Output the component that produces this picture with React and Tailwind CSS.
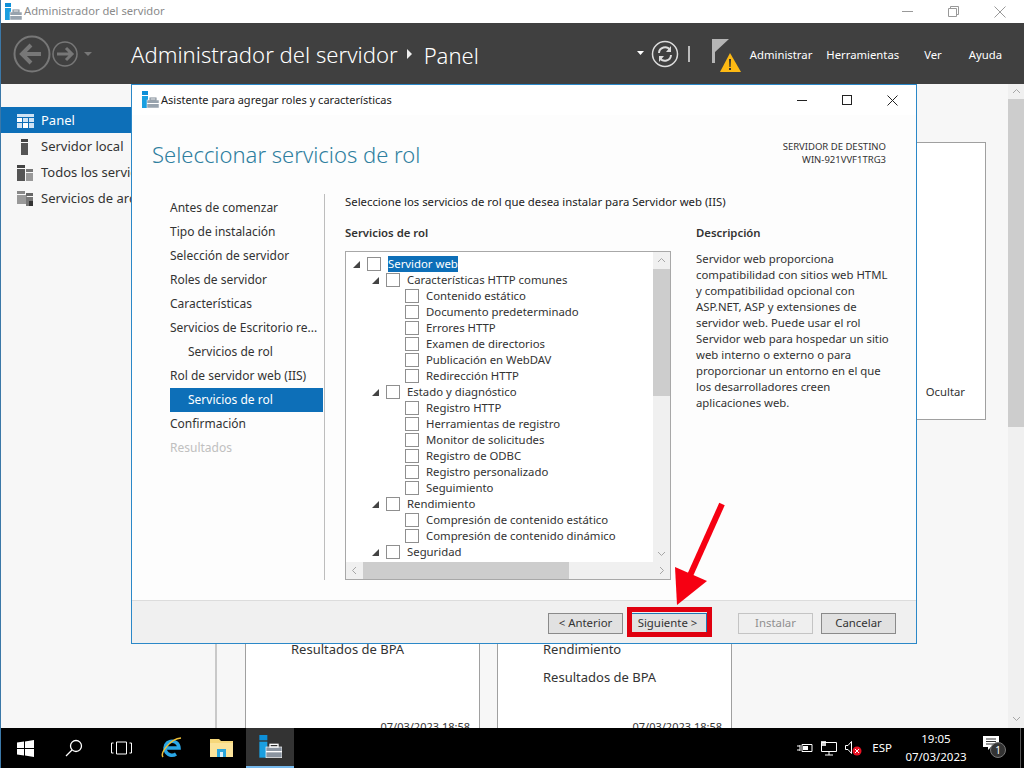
import React from "react";

const navItems = [
  { label: "Antes de comenzar" },
  { label: "Tipo de instalación" },
  { label: "Selección de servidor" },
  { label: "Roles de servidor" },
  { label: "Características" },
  { label: "Servicios de Escritorio re..." },
  { label: "Servicios de rol", sub: true },
  { label: "Rol de servidor web (IIS)" },
  { label: "Servicios de rol", sub: true, active: true },
  { label: "Confirmación" },
  { label: "Resultados", disabled: true },
];

const treeRows = [
  { label: "Servidor web", level: 0, open: true, selected: true },
  { label: "Características HTTP comunes", level: 1, open: true },
  { label: "Contenido estático", level: 2 },
  { label: "Documento predeterminado", level: 2 },
  { label: "Errores HTTP", level: 2 },
  { label: "Examen de directorios", level: 2 },
  { label: "Publicación en WebDAV", level: 2 },
  { label: "Redirección HTTP", level: 2 },
  { label: "Estado y diagnóstico", level: 1, open: true },
  { label: "Registro HTTP", level: 2 },
  { label: "Herramientas de registro", level: 2 },
  { label: "Monitor de solicitudes", level: 2 },
  { label: "Registro de ODBC", level: 2 },
  { label: "Registro personalizado", level: 2 },
  { label: "Seguimiento", level: 2 },
  { label: "Rendimiento", level: 1, open: true },
  { label: "Compresión de contenido estático", level: 2 },
  { label: "Compresión de contenido dinámico", level: 2 },
  { label: "Seguridad", level: 1, open: true },
];

const ServerIcon = ({ size = 18, dark }) => (
  <svg width={size} height={size} viewBox="0 0 18 18">
    <rect x="1" y="0" width="6" height="4" fill="#0d8fd8" />
    <rect x="1" y="5" width="6" height="12" fill="#1a9fe0" />
    <rect x="6" y="9" width="12" height="8" fill={dark ? "#8a94a0" : "#98a3ae"} stroke="#fff" strokeWidth="0.5" />
    <rect x="9" y="7" width="6" height="2" fill="none" stroke={dark ? "#fff" : "#7d8894"} strokeWidth="1" />
    <rect x="6" y="12" width="12" height="1" fill="#fff" />
  </svg>
);

const SideIcon = ({ type }) => {
  if (type === "panel") {
    return (
      <svg width="17" height="14" viewBox="0 0 17 14">
        <rect width="17" height="3" fill="#cfe3f4" />
        <rect y="4" width="5" height="4" fill="#fff" />
        <rect x="6" y="4" width="5" height="4" fill="#cfe3f4" />
        <rect x="12" y="4" width="5" height="4" fill="#cfe3f4" />
        <rect y="9" width="5" height="5" fill="#cfe3f4" />
        <rect x="6" y="9" width="5" height="5" fill="#fff" />
        <rect x="12" y="9" width="5" height="5" fill="#cfe3f4" />
      </svg>
    );
  }
  if (type === "local") {
    return (
      <svg width="17" height="16" viewBox="0 0 17 16">
        <rect x="4" y="0" width="7" height="3" fill="#444" />
        <rect x="4" y="4" width="7" height="12" fill="#555" />
      </svg>
    );
  }
  if (type === "all") {
    return (
      <svg width="17" height="16" viewBox="0 0 17 16">
        <rect x="0" y="0" width="8" height="3" fill="#444" />
        <rect x="0" y="4" width="8" height="12" fill="#555" />
        <rect x="9" y="4" width="7" height="3" fill="#777" />
        <rect x="9" y="8" width="7" height="8" fill="#999" />
      </svg>
    );
  }
  return (
    <svg width="17" height="15" viewBox="0 0 17 15">
      <rect x="0" y="0" width="8" height="3" fill="#888" />
      <rect x="0" y="4" width="10" height="9" fill="#999" />
      <rect x="9" y="2" width="7" height="3" fill="#666" />
      <rect x="9" y="6" width="7" height="9" fill="#777" />
      <rect x="12" y="10" width="4" height="5" fill="#333" />
    </svg>
  );
};

const Chevron = ({ d }) => (
  <svg width="9" height="9" viewBox="0 0 9 9" fill="none" stroke="#a6a6a6" strokeWidth="1">
    <path d={d} />
  </svg>
);

const TreeRow = ({ row }) => {
  const indent = ["pl-[7px]", "pl-[26px]", "pl-[45px]"][row.level];
  return (
    <div className={`flex h-4 shrink-0 items-center ${indent}`}>
      <div className="flex w-[14px] shrink-0 items-center">
        {row.open && (
          <svg width="7" height="7" viewBox="0 0 7 7">
            <path d="M0 7L7 0V7Z" fill="#444" />
          </svg>
        )}
      </div>
      <div className="h-[14px] w-[14px] shrink-0 border border-[#8f8f8f] bg-white" />
      <span
        className={`ml-[7px] whitespace-nowrap leading-4 ${
          row.selected ? "bg-[#0d6fb8] text-white" : "text-[#333]"
        }`}
      >
        {row.label}
      </span>
    </div>
  );
};

const DialogButton = ({ label, disabled }) => (
  <button
    className={`h-[21px] w-[75px] border text-[11.4px] ${
      disabled
        ? "border-[#c4c4c4] bg-[#efefef] text-[#8f8f8f]"
        : "border-[#8a8a8a] bg-[#e1e1e1] text-[#333]"
    }`}
  >
    {label}
  </button>
);

const Dialog = () => (
  <div className="absolute left-[130px] top-[84px] flex h-[560px] w-[786px] flex-col border border-[#2b88c8] bg-white text-xs text-[#333]">
    <div className="flex h-[30px] shrink-0 items-center pl-[9px]">
      <ServerIcon />
      <span className="ml-[2px] text-[11px] text-[#222]">Asistente para agregar roles y características</span>
      <div className="ml-auto flex items-center gap-[35px] pr-[18px]">
        <svg width="10" height="10" viewBox="0 0 10 10"><path d="M0 5.5H10" stroke="#222" /></svg>
        <svg width="10" height="10" viewBox="0 0 10 10"><rect x="0.5" y="0.5" width="9" height="9" fill="none" stroke="#222" /></svg>
        <svg width="11" height="11" viewBox="0 0 11 11"><path d="M0.5 0.5L10.5 10.5M10.5 0.5L0.5 10.5" stroke="#222" /></svg>
      </div>
    </div>

    <div className="flex min-h-0 flex-1 flex-col bg-[#fdfdfd]">
      <div className="flex h-[79px] shrink-0 items-start justify-between pl-[20px] pr-[30px]">
        <h1 className="mt-[21px] text-[22px] font-light leading-[36px] text-[#2f7f9f]">
          Seleccionar servicios de rol
        </h1>
        <div className="mt-[25px] text-right text-[9.5px] leading-[13px]">
          <div>SERVIDOR DE DESTINO</div>
          <div>WIN-921VVF1TRG3</div>
        </div>
      </div>

      <div className="flex min-h-0 flex-1">
        <nav className="flex w-[192px] shrink-0 flex-col pl-[38px] pr-[1px] pt-[2px] pb-[20px]">
          {navItems.map((item, i) => (
            <div
              key={i}
              className={`flex h-6 items-center whitespace-nowrap ${item.sub ? "pl-[18px]" : ""} ${
                item.active ? "bg-[#0d6fb8] text-white" : ""
              } ${item.disabled ? "text-[#c0c0c0]" : ""}`}
            >
              {item.label}
            </div>
          ))}
        </nav>

        <div className="mb-[20px] flex min-w-0 flex-1 border-l border-[#bdbdbd] pl-[20px]">
          <div className="flex min-w-0 flex-1 flex-col text-[11.35px]">
            <p className="leading-[16px] text-[#222]">
              Seleccione los servicios de rol que desea instalar para Servidor web (IIS)
            </p>
            <div className="flex min-h-0 flex-1 pt-[15px]">
              <div className="flex w-[326px] shrink-0 flex-col">
                <h2 className="font-semibold leading-4">Servicios de rol</h2>
                <div className="mt-[10px] flex h-[330px] flex-col border border-[#a8a8a8] bg-white">
                  <div className="flex min-h-0 flex-1">
                    <div className="flex min-w-0 flex-1 flex-col overflow-hidden pt-[4px]">
                      {treeRows.map((row, i) => (
                        <TreeRow key={i} row={row} />
                      ))}
                    </div>
                    <div className="flex w-[17px] shrink-0 flex-col bg-[#f0f0f0]">
                      <div className="flex h-[17px] items-center justify-center"><Chevron d="M1 6L4.5 2.5L8 6" /></div>
                      <div className="h-[127px] bg-[#cdcdcd]" />
                      <div className="mt-auto flex h-[17px] items-center justify-center"><Chevron d="M1 3L4.5 6.5L8 3" /></div>
                    </div>
                  </div>
                  <div className="flex h-[17px] shrink-0 bg-[#f0f0f0]">
                    <div className="flex w-[17px] items-center justify-center"><Chevron d="M6 1L2.5 4.5L6 8" /></div>
                    <div className="w-[206px] bg-[#cdcdcd]" />
                    <div className="ml-auto flex w-[17px] items-center justify-center"><Chevron d="M3 1L6.5 4.5L3 8" /></div>
                  </div>
                </div>
              </div>
              <div className="ml-[25px] w-[195px] shrink-0">
                <h2 className="font-semibold leading-4">Descripción</h2>
                <p className="mt-[10px] leading-4">
                  Servidor web proporciona compatibilidad con sitios web HTML y compatibilidad opcional con ASP.NET, ASP y extensiones de servidor web. Puede usar el rol Servidor web para hospedar un sitio web interno o externo o para proporcionar un entorno en el que los desarrolladores creen aplicaciones web.
                </p>
              </div>
            </div>
          </div>
        </div>
      </div>
    </div>

    <div className="flex h-[43px] shrink-0 items-center border-t border-[#dcdcdc] bg-[#f0f0f0] pl-[416px] pt-[2px]">
      <DialogButton label="< Anterior" />
      <div className="ml-[5px] flex h-[21px] w-[79px] items-center justify-center border border-[#1f78b4] bg-[#e1e1e1] text-[11.4px]">Siguiente &gt;</div>
      <div className="ml-[31px]"><DialogButton label="Instalar" disabled /></div>
      <div className="ml-2"><DialogButton label="Cancelar" /></div>
    </div>
  </div>
);

export default function App() {
  return (
    <div className="relative flex h-[768px] w-[1024px] flex-col overflow-hidden border-l border-[#3b78a8] bg-white font-['Noto_Sans',sans-serif] text-[#333]">
      <div className="flex h-[23px] shrink-0 items-center pl-[3px]">
        <ServerIcon />
        <span className="ml-[2px] text-[11.2px] text-[#8a8a8a]">Administrador del servidor</span>
        <div className="ml-auto flex items-center gap-[35px] pr-[18px]">
          <svg width="11" height="11" viewBox="0 0 11 11"><path d="M0 5.5H11" stroke="#999" /></svg>
          <svg width="11" height="11" viewBox="0 0 11 11" fill="none" stroke="#999"><path d="M0.5 2.5H8.5V10.5H0.5ZM2.5 2.5V0.5H10.5V8.5H8.5" /></svg>
          <svg width="12" height="12" viewBox="0 0 12 12"><path d="M0.5 0.5L11.5 11.5M11.5 0.5L0.5 11.5" stroke="#999" /></svg>
        </div>
      </div>

      <header className="flex h-[61px] shrink-0 items-center bg-[#404040] pl-[12px] text-white">
        <svg width="84" height="40" viewBox="0 0 84 40" fill="none" stroke="#777">
          <circle cx="19" cy="20" r="17.5" strokeWidth="2" />
          <path d="M10 20H28M18 11L9 20L18 29" strokeWidth="4" />
          <circle cx="52" cy="20" r="12" strokeWidth="1.5" />
          <path d="M44 20H59M53 14L59 20L53 26" strokeWidth="3" />
          <path d="M71 18H79L75 22Z" fill="#777" stroke="none" />
        </svg>
        <span className="ml-[34px] mt-[2px] text-[22.1px] font-light leading-none">Administrador del servidor</span>
        <svg className="ml-[8px]" width="8" height="10" viewBox="0 0 8 10"><path d="M1 0L6 5L1 10Z" fill="#eee" /></svg>
        <span className="ml-[10px] mt-[2px] text-[22px] font-light leading-none">Panel</span>
        <div className="ml-auto flex items-center pr-[22px] text-[11.3px]">
          <svg width="7" height="5" viewBox="0 0 7 5"><path d="M0 0H7L3.5 4Z" fill="#fff" /></svg>
          <svg className="ml-[7px]" width="28" height="28" viewBox="0 0 28 28" fill="none" stroke="#ddd">
            <circle cx="14" cy="14" r="12.5" strokeWidth="1.5" />
            <path d="M8 13A6 6 0 0 1 19 10M20 15A6 6 0 0 1 9 18" strokeWidth="2" />
            <path d="M20 6V12H15ZM8 22V16H13Z" fill="#ddd" stroke="none" />
          </svg>
          <div className="ml-[9px] h-4 w-[2px] bg-[#bbb]" />
          <svg className="ml-[22px] mt-[4px]" width="30" height="36" viewBox="0 0 30 36">
            <path d="M0 1H3V25H0ZM3 1H17L3 14Z" fill="#b5b5b5" />
            <path d="M18 15L29 34H8Z" fill="#fdb913" />
            <path d="M17 21H19L18.6 29H17.4ZM17 30H19V32H17Z" fill="#333" />
          </svg>
          <span className="ml-[8px] mt-[3px]">Administrar</span>
          <span className="ml-[14px] mt-[3px]">Herramientas</span>
          <span className="ml-[25px] mt-[3px]">Ver</span>
          <span className="ml-[27px] mt-[3px]">Ayuda</span>
        </div>
      </header>

      <div className="flex min-h-0 flex-1 bg-[#f7f7f7]">
        <aside className="w-[216px] shrink-0 border-r-2 border-[#c9c9c9] pt-[23px] text-[13px]">
          {[
            { label: "Panel", icon: "panel", active: true },
            { label: "Servidor local", icon: "local" },
            { label: "Todos los servidores", icon: "all" },
            { label: "Servicios de archivos", icon: "files" },
          ].map((item) => (
            <div
              key={item.label}
              className={`flex h-[26px] items-center whitespace-nowrap pl-[16px] pt-[1px] ${
                item.active ? "bg-[#0d6fb8] text-white" : ""
              }`}
            >
              <SideIcon type={item.icon} />
              <span className="ml-[7px]">{item.label}</span>
            </div>
          ))}
        </aside>

        <main className="flex min-w-0 flex-1 flex-col pl-[28px] pt-[58px]">
          <div className="mr-[22px] flex h-[278px] shrink-0 items-center justify-end border border-[#a0a0a0] bg-white pr-[20px] text-[11.3px]">
            <span className="mt-[222px]">Ocultar</span>
          </div>
          <div className="mt-[40px] flex gap-[17px] text-[13px]">
            <div className="flex h-[300px] w-[235px] shrink-0 flex-col border border-[#a0a0a0] bg-white pl-[45px]">
              <div className="mt-[174px] leading-[28px]">Resultados de BPA</div>
              <div className="mr-[9px] mt-[56px] text-right text-[11px]">07/03/2023 18:58</div>
            </div>
            <div className="flex h-[300px] w-[235px] shrink-0 flex-col border border-[#a0a0a0] bg-white pl-[45px]">
              <div className="mt-[174px] leading-[28px]">Rendimiento</div>
              <div className="leading-[28px]">Resultados de BPA</div>
              <div className="mr-[9px] mt-[28px] text-right text-[11px]">07/03/2023 18:58</div>
            </div>
          </div>
        </main>

        <div className="flex w-4 shrink-0 flex-col bg-[#f0f0f0]">
          <div className="flex h-[15px] items-center justify-center"><Chevron d="M1 6L4.5 2.5L8 6" /></div>
          <div className="h-[328px] bg-[#cdcdcd]" />
          <div className="mt-auto flex h-[20px] items-center justify-center"><Chevron d="M1 3L4.5 6.5L8 3" /></div>
        </div>
      </div>

      <footer className="flex h-10 shrink-0 items-center bg-black text-xs text-white">
        <svg className="ml-[16px]" width="17" height="17" viewBox="0 0 17 17" fill="#fff">
          <path d="M0 2.5L7 1.5V8H0ZM8 1.4L17 0V8H8ZM0 9H7V15.5L0 14.5ZM8 9H17V17L8 15.6Z" />
        </svg>
        <svg className="ml-[31px]" width="18" height="18" viewBox="0 0 18 18" fill="none" stroke="#fff" strokeWidth="1.3">
          <circle cx="11" cy="7" r="5.5" />
          <path d="M7 11L1 17" />
        </svg>
        <svg className="ml-[28px]" width="21" height="14" viewBox="0 0 21 14" fill="none" stroke="#fff">
          <path d="M5.5 1H15.5V13H5.5ZM2.5 2H0.5V12H2.5M18.5 2H20.5V12H18.5" />
        </svg>
        <svg className="ml-[28px]" width="24" height="24" viewBox="0 0 24 24" fill="none">
          <path d="M6 12H19A7 7 0 1 0 16 18" stroke="#2aa7e6" strokeWidth="3.5" />
          <path d="M3 21C0 17 10 3 21 2" stroke="#f0c23b" strokeWidth="1.5" />
        </svg>
        <svg className="ml-[26px]" width="23" height="20" viewBox="0 0 23 20">
          <path d="M0 1H9L11 3H23V19H0Z" fill="#f6d77a" />
          <path d="M0 5H23V19H0Z" fill="#fbe39a" />
          <path d="M7 11H16V19H7Z" fill="#29a5dc" />
          <path d="M10 14H13V19H10Z" fill="#d9f0fa" />
        </svg>
        <div className="ml-[13px] flex h-10 w-[48px] items-center justify-center border-b-2 border-[#76b9ed] bg-[#333]">
          <ServerIcon size={24} dark />
        </div>

        <div className="ml-auto flex items-center pr-[13px]">
          <svg width="16" height="12" viewBox="0 0 16 12" fill="none" stroke="#fff">
            <path d="M5 2.5H15V9.5H5Z" /><path d="M6 4H11V8H6Z" fill="#fff" stroke="none" />
            <path d="M0 4H3M0 8H3M3 3V9" />
          </svg>
          <svg className="ml-[8px]" width="16" height="15" viewBox="0 0 16 15" fill="none" stroke="#fff">
            <path d="M0.5 1.5H15.5V10.5H0.5ZM8 10.5V14M4 14H12" />
            <rect x="0" y="0" width="5" height="5" fill="#fff" stroke="none" opacity="0.8" />
          </svg>
          <svg className="ml-[8px]" width="17" height="16" viewBox="0 0 17 16" fill="none" stroke="#fff">
            <path d="M0.5 5.5H3L6.5 1.5V13.5L3 9.5H0.5Z" />
            <circle cx="12" cy="11" r="4.5" fill="#e81123" stroke="none" />
            <path d="M10 9L14 13M14 9L10 13" />
          </svg>
          <span className="ml-[10px] text-[11.5px]">ESP</span>
          <div className="ml-[14px] flex w-[60px] flex-col items-center text-[11.5px] leading-[18px]">
            <span>19:05</span>
            <span>07/03/2023</span>
          </div>
          <div className="relative ml-[17px] h-6 w-[24px]">
            <svg width="17" height="15" viewBox="0 0 17 15" fill="#fff">
              <path d="M0 0H16V11H8L5 14V11H0Z" />
              <path d="M3 3H13M3 5.5H13M3 8H13" stroke="#000" strokeWidth="0.8" />
            </svg>
            <span className="absolute left-[7px] top-[6px] flex h-4 w-4 items-center justify-center rounded-full border border-[#777] bg-[#333] text-[10px] leading-none">1</span>
          </div>
        </div>
        <div className="h-10 w-px bg-[#555]" />
        <div className="w-[3px]" />
      </footer>

      <Dialog />

      <div className="absolute left-[626px] top-[607px] h-[30px] w-[85px] border-[5px] border-[#e0000f]" />
      <svg className="absolute left-[669px] top-[500px]" width="60" height="110" viewBox="0 0 60 110">
        <path d="M52 4L18 80" stroke="#f60012" strokeWidth="6" />
        <path d="M5 67L37 81L7 105Z" fill="#f60012" />
      </svg>
    </div>
  );
}
